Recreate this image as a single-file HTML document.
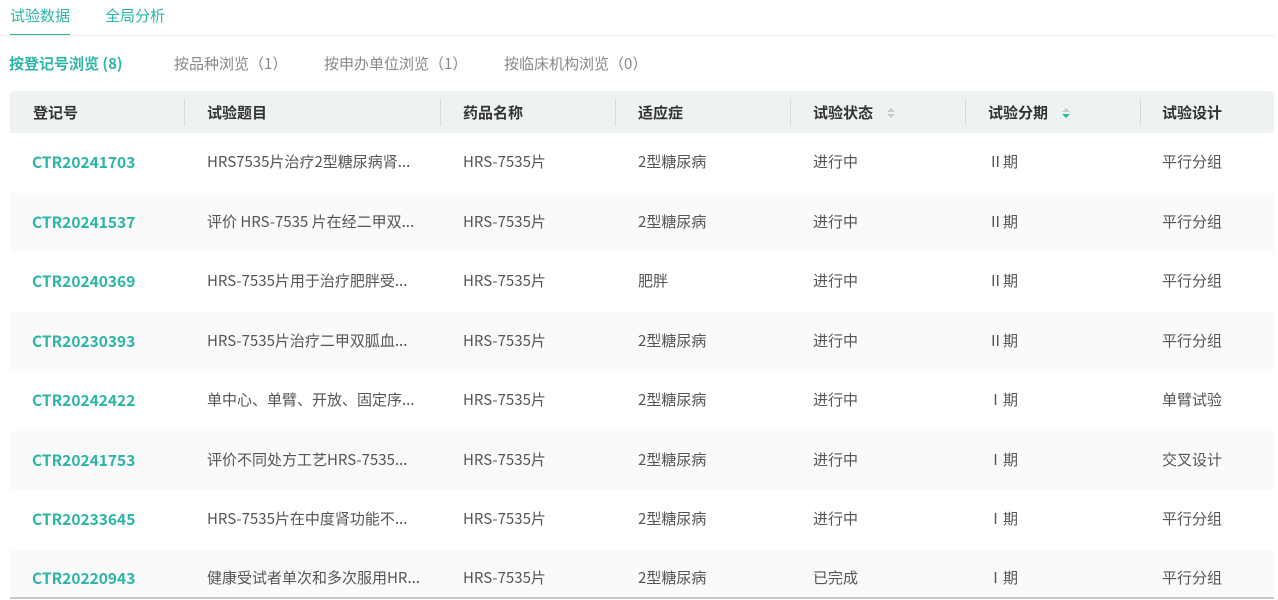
<!DOCTYPE html>
<html><head><meta charset="utf-8"><style>
*{margin:0;padding:0;box-sizing:border-box}
body{width:1278px;height:600px;background:#fff;font-family:"Noto Sans CJK SC","Liberation Sans",sans-serif;font-size:15px;line-height:20px;color:#555;position:relative;overflow:hidden}
.a{position:absolute;white-space:nowrap;line-height:20px}
.t{color:#2bb5a6}
.row{position:absolute;left:10px;width:1264px;height:59.5px}
.g{background:#fafafa}
.hd{position:absolute;left:10px;top:91px;width:1264px;height:42px;background:#eef2f2;border-radius:6px 6px 0 0}
.sep{position:absolute;top:99px;width:1px;height:27px;background:#d6dcdc}
.h{color:#333;font-weight:bold;font-size:15px}
.id{color:#2bb5a6;font-weight:bold;font-size:15.5px}
</style></head><body>
<div class="a t" style="left:10px;top:6px">试验数据</div>
<div class="a t" style="left:105px;top:6px">全局分析</div>
<div class="a" style="left:10px;top:34px;width:60px;height:2px;background:#2bb5a6"></div>
<div class="a" style="left:0;top:35px;width:1274px;height:1px;background:#ececec"></div>
<div class="a t" style="left:9px;top:54px;font-weight:bold">按登记号浏览 (8)</div>
<div class="a" style="left:174px;top:54px;color:#888">按品种浏览（1）</div>
<div class="a" style="left:324px;top:54px;color:#888">按申办单位浏览（1）</div>
<div class="a" style="left:504px;top:54px;color:#888">按临床机构浏览（0）</div>
<div class="hd"></div>
<div class="sep" style="left:184px"></div><div class="sep" style="left:440px"></div><div class="sep" style="left:615px"></div><div class="sep" style="left:790px"></div><div class="sep" style="left:965px"></div><div class="sep" style="left:1140px"></div>
<div class="a h" style="left:33px;top:103px">登记号</div>
<div class="a h" style="left:207px;top:103px">试验题目</div>
<div class="a h" style="left:463px;top:103px">药品名称</div>
<div class="a h" style="left:638px;top:103px">适应症</div>
<div class="a h" style="left:813px;top:103px">试验状态</div>
<div class="a h" style="left:988px;top:103px">试验分期</div>
<div class="a h" style="left:1162px;top:103px">试验设计</div>
<svg class="a" style="left:885px;top:106px" width="12" height="14"><path d="M2 6L6 2L10 6Z" fill="#c8cccc"/><path d="M2 8L6 12L10 8Z" fill="#c8cccc"/></svg>
<svg class="a" style="left:1060px;top:106px" width="12" height="14"><path d="M2 6L6 2L10 6Z" fill="#c8cccc"/><path d="M2 8L6 12L10 8Z" fill="#2bb5a6"/></svg>
<div class="row" style="top:133px"></div>
<div class="row g" style="top:192.5px"></div>
<div class="row" style="top:252px"></div>
<div class="row g" style="top:311.5px"></div>
<div class="row" style="top:371px"></div>
<div class="row g" style="top:430.5px"></div>
<div class="row" style="top:490px"></div>
<div class="row g" style="top:549.5px;height:48px"></div>
<div class="a" style="left:10px;top:597px;width:1264px;height:2px;background:#c8c8c8"></div>

<div class="a id" style="left:32px;top:152px">CTR20241703</div><div class="a" style="left:207px;top:152px">HRS7535片治疗2型糖尿病肾...</div><div class="a" style="left:463px;top:152px">HRS-7535片</div><div class="a" style="left:638px;top:152px">2型糖尿病</div><div class="a" style="left:813px;top:152px">进行中</div><div class="a" style="left:988px;top:152px">Ⅱ期</div><div class="a" style="left:1162px;top:152px">平行分组</div>
<div class="a id" style="left:32px;top:212px">CTR20241537</div><div class="a" style="left:207px;top:212px">评价 HRS-7535 片在经二甲双...</div><div class="a" style="left:463px;top:212px">HRS-7535片</div><div class="a" style="left:638px;top:212px">2型糖尿病</div><div class="a" style="left:813px;top:212px">进行中</div><div class="a" style="left:988px;top:212px">Ⅱ期</div><div class="a" style="left:1162px;top:212px">平行分组</div>
<div class="a id" style="left:32px;top:271px">CTR20240369</div><div class="a" style="left:207px;top:271px">HRS-7535片用于治疗肥胖受...</div><div class="a" style="left:463px;top:271px">HRS-7535片</div><div class="a" style="left:638px;top:271px">肥胖</div><div class="a" style="left:813px;top:271px">进行中</div><div class="a" style="left:988px;top:271px">Ⅱ期</div><div class="a" style="left:1162px;top:271px">平行分组</div>
<div class="a id" style="left:32px;top:331px">CTR20230393</div><div class="a" style="left:207px;top:331px">HRS-7535片治疗二甲双胍血...</div><div class="a" style="left:463px;top:331px">HRS-7535片</div><div class="a" style="left:638px;top:331px">2型糖尿病</div><div class="a" style="left:813px;top:331px">进行中</div><div class="a" style="left:988px;top:331px">Ⅱ期</div><div class="a" style="left:1162px;top:331px">平行分组</div>
<div class="a id" style="left:32px;top:390px">CTR20242422</div><div class="a" style="left:207px;top:390px">单中心、单臂、开放、固定序...</div><div class="a" style="left:463px;top:390px">HRS-7535片</div><div class="a" style="left:638px;top:390px">2型糖尿病</div><div class="a" style="left:813px;top:390px">进行中</div><div class="a" style="left:988px;top:390px">Ⅰ期</div><div class="a" style="left:1162px;top:390px">单臂试验</div>
<div class="a id" style="left:32px;top:450px">CTR20241753</div><div class="a" style="left:207px;top:450px">评价不同处方工艺HRS-7535...</div><div class="a" style="left:463px;top:450px">HRS-7535片</div><div class="a" style="left:638px;top:450px">2型糖尿病</div><div class="a" style="left:813px;top:450px">进行中</div><div class="a" style="left:988px;top:450px">Ⅰ期</div><div class="a" style="left:1162px;top:450px">交叉设计</div>
<div class="a id" style="left:32px;top:509px">CTR20233645</div><div class="a" style="left:207px;top:509px">HRS-7535片在中度肾功能不...</div><div class="a" style="left:463px;top:509px">HRS-7535片</div><div class="a" style="left:638px;top:509px">2型糖尿病</div><div class="a" style="left:813px;top:509px">进行中</div><div class="a" style="left:988px;top:509px">Ⅰ期</div><div class="a" style="left:1162px;top:509px">平行分组</div>
<div class="a id" style="left:32px;top:568px">CTR20220943</div><div class="a" style="left:207px;top:568px">健康受试者单次和多次服用HR...</div><div class="a" style="left:463px;top:568px">HRS-7535片</div><div class="a" style="left:638px;top:568px">2型糖尿病</div><div class="a" style="left:813px;top:568px">已完成</div><div class="a" style="left:988px;top:568px">Ⅰ期</div><div class="a" style="left:1162px;top:568px">平行分组</div>
</body></html>
